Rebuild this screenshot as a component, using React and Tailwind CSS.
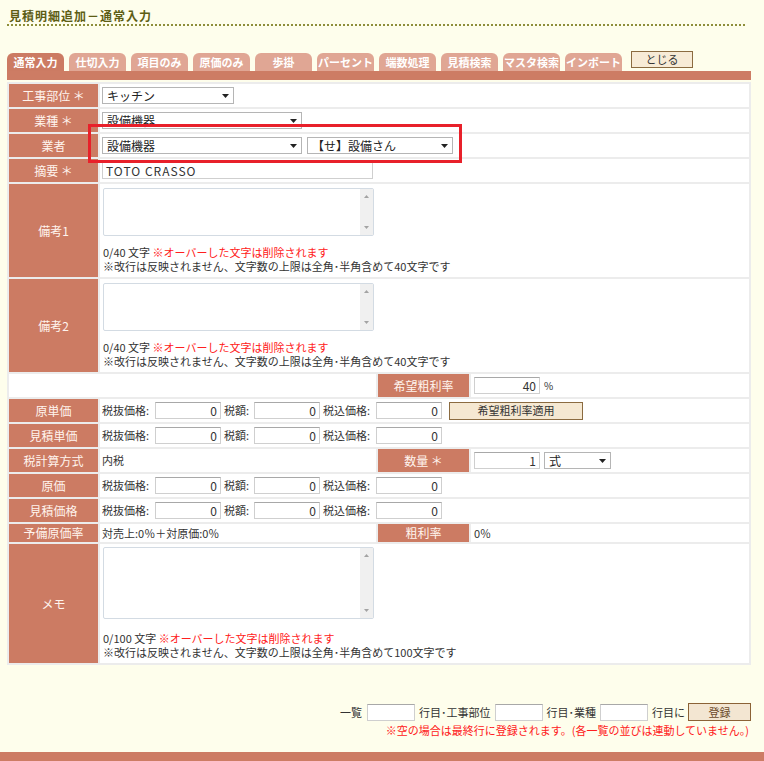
import React from 'react';

const LABEL = 'bg-[#cc7b63] text-[#fff4ee] text-[12px] flex items-center justify-center shrink-0';

const Arrow = () => (
    <svg width="7" height="4" viewBox="0 0 7 4" className="shrink-0">
        <path d="M0 0 L7 0 L3.5 4 Z" fill="#222" />
    </svg>
);

const Select = ({ w, value }) => (
    <div className={`${w} h-[17px] bg-white border border-[#b5b5b5] flex items-center justify-between pl-[4px] pr-[4px] text-[12px] text-[#222]`}>
        <span>{value}</span>
        <Arrow />
    </div>
);

const Input = ({ w, value, align = 'right', extra = '' }) => (
    <div className={`${w} h-[17px] bg-white border border-[#cfcfcf] border-t-[#a8a8a8] flex items-center px-[3px] text-[12px] text-[#333] ${align === 'right' ? 'justify-end' : 'justify-start'} ${extra}`}>
        {value}
    </div>
);

const TextArea = ({ h }) => (
    <div className={`w-[271px] ${h} bg-white border border-[#d3dbe3] rounded-[2px] flex justify-end`}>
        <div className="w-[13px] h-full bg-[#f0f0f0] flex flex-col items-center justify-between py-[6px]">
            <svg width="5" height="3" viewBox="0 0 5 3"><path d="M0 3 L5 3 L2.5 0 Z" fill="#a3a3a3" /></svg>
            <svg width="5" height="3" viewBox="0 0 5 3"><path d="M0 0 L5 0 L2.5 3 Z" fill="#a3a3a3" /></svg>
        </div>
    </div>
);

const Counter = ({ max }) => (
    <div className="text-[11px] text-[#333] flex flex-col">
        <div className="h-[14px] leading-[14px]">
            0/{max} 文字 <span className="text-[#ff2020]">※オーバーした文字は削除されます</span>
        </div>
        <div className="h-[14px] leading-[14px]">※改行は反映されません、文字数の上限は全角･半角含めて{max}文字です</div>
    </div>
);

const PriceFields = () => (
    <div className="flex items-center text-[11px] text-[#333]">
        <span className="w-[53px]">税抜価格:</span>
        <Input w="w-[66px]" value="0" />
        <span className="ml-[3px] w-[30px]">税額:</span>
        <Input w="w-[66px]" value="0" />
        <span className="ml-[3px] w-[53px]">税込価格:</span>
        <Input w="w-[66px]" value="0" />
    </div>
);

const Row = ({ label, h = 'h-[23px]', children }) => (
    <div className={`flex gap-[2px] ${h}`}>
        <div className={`${LABEL} w-[89px]`}>{label}</div>
        <div className="flex-1 bg-white flex items-center pl-[2px]">{children}</div>
    </div>
);

const SplitRow = ({ label, h = 'h-[23px]', left, label2, right }) => (
    <div className={`flex gap-[2px] ${h}`}>
        {label ? (
            <>
                <div className={`${LABEL} w-[89px]`}>{label}</div>
                <div className="w-[276px] bg-white flex items-center pl-[2px] text-[11px] text-[#333]">{left}</div>
            </>
        ) : (
            <div className="w-[367px] bg-white" />
        )}
        <div className={`${LABEL} w-[91px]`}>{label2}</div>
        <div className="flex-1 bg-white flex items-center pl-[3px] text-[11px] text-[#333]">{right}</div>
    </div>
);

const tabs = ['通常入力', '仕切入力', '項目のみ', '原価のみ', '歩掛', 'パーセント', '端数処理', '見積検索', 'マスタ検索', 'インポート'];

export default function App() {
    return (
        <div className="w-[764px] h-[761px] bg-[#fefeec] flex flex-col relative" style={{ fontFamily: '"Noto Sans CJK JP", "Noto Sans", sans-serif' }}>
            {/* Title */}
            <div className="px-[7px] pt-[9px] w-[752px]">
                <div className="pl-[2px] text-[12px] leading-[14px] font-bold tracking-[1px] text-[#5d5d15]">見積明細追加－通常入力</div>
                <div className="mt-[1px] border-b-2 border-dotted border-[#8e8e3a]" />
            </div>

            {/* Tabs */}
            <div className="mt-[25px] pl-[7px] flex items-end gap-[5px] h-[20px]">
                {tabs.map((t, i) => (
                    <div
                        key={t}
                        className={`w-[57px] h-[18px] rounded-t-[6px] flex items-center justify-center text-[11px] font-bold text-white ${i === 0 ? 'bg-[#cc7b63]' : 'bg-[#e0a694]'}`}
                    >
                        {t}
                    </div>
                ))}
                <div className="ml-[4px] mb-[3px] w-[62px] h-[17px] bg-[#f7ebd6] border border-[#8b6b40] flex items-center justify-center text-[11px] text-[#333]">
                    とじる
                </div>
            </div>
            <div className="ml-[7px] w-[744px] h-[9px] bg-[#cd7c64]" />

            {/* Form table */}
            <div className="ml-[7px] mt-[2px] w-[744px] bg-[#ececec] p-[2px] flex flex-col gap-[2px]">
                <Row label="工事部位 ＊">
                    <Select w="w-[132px]" value="キッチン" />
                </Row>
                <Row label="業種 ＊">
                    <Select w="w-[200px]" value="設備機器" />
                </Row>
                <Row label="業者">
                    <div className="flex gap-[5px]">
                        <Select w="w-[200px]" value="設備機器" />
                        <Select w="w-[146px]" value="【せ】設備さん" />
                    </div>
                </Row>
                <Row label="摘要 ＊">
                    <Input w="w-[271px]" value="TOTO CRASSO" align="left" extra="tracking-[1px]" />
                </Row>
                <div className="flex gap-[2px] h-[93px]">
                    <div className={`${LABEL} w-[89px]`}>備考1</div>
                    <div className="flex-1 bg-white pl-[3px] pt-[4px] flex flex-col">
                        <TextArea h="h-[48px]" />
                        <div className="mt-[9px]"><Counter max="40" /></div>
                    </div>
                </div>
                <div className="flex gap-[2px] h-[93px]">
                    <div className={`${LABEL} w-[89px]`}>備考2</div>
                    <div className="flex-1 bg-white pl-[3px] pt-[4px] flex flex-col">
                        <TextArea h="h-[48px]" />
                        <div className="mt-[9px]"><Counter max="40" /></div>
                    </div>
                </div>
                <SplitRow
                    label2="希望粗利率"
                    right={
                        <div className="flex items-center gap-[4px]">
                            <Input w="w-[66px]" value="40" />
                            <span className="text-[10px]">%</span>
                        </div>
                    }
                />
                <Row label="原単価">
                    <PriceFields />
                    <div className="ml-[7px] w-[134px] h-[18px] bg-[#f5e8d2] border border-[#8b6b40] flex items-center justify-center text-[11px] text-[#333]">
                        希望粗利率適用
                    </div>
                </Row>
                <Row label="見積単価">
                    <PriceFields />
                </Row>
                <SplitRow
                    label="税計算方式"
                    left="内税"
                    label2="数量 ＊"
                    right={
                        <div className="flex items-center gap-[4px]">
                            <Input w="w-[66px]" value="1" />
                            <Select w="w-[67px]" value="式" />
                        </div>
                    }
                />
                <Row label="原価">
                    <PriceFields />
                </Row>
                <Row label="見積価格">
                    <PriceFields />
                </Row>
                <SplitRow h="h-[18px]" label="予備原価率" left="対売上:0％＋対原価:0％" label2="粗利率" right="0％" />
                <div className="flex gap-[2px] h-[119px]">
                    <div className={`${LABEL} w-[89px]`}>メモ</div>
                    <div className="flex-1 bg-white pl-[3px] pt-[3px] flex flex-col">
                        <TextArea h="h-[72px]" />
                        <div className="mt-[12px]"><Counter max="100" /></div>
                    </div>
                </div>
            </div>

            {/* Register */}
            <div className="mt-[38px] w-[751px] flex flex-col items-end">
                <div className="flex items-center text-[11px] text-[#333]">
                    <span className="mr-[5px]">一覧</span>
                    <Input w="w-[48px]" value="" />
                    <span className="mx-[4px]">行目･工事部位</span>
                    <Input w="w-[48px]" value="" />
                    <span className="mx-[4px]">行目･業種</span>
                    <Input w="w-[48px]" value="" />
                    <span className="ml-[4px] mr-[3px]">行目に</span>
                    <div className="w-[63px] h-[18px] bg-[#f3e6d2] border border-[#8b6236] flex items-center justify-center text-[11px] text-[#6b4a2a]">
                        登録
                    </div>
                </div>
                <div className="mt-[1px] mr-[2px] text-[11px] text-[#ff2020]">※空の場合は最終行に登録されます。(各一覧の並びは連動していません。)</div>
            </div>

            <div className="mt-auto h-[9px] bg-[#cd7c64]" />

            {/* Highlight annotation */}
            <div className="absolute left-[88px] top-[124px] w-[374px] h-[39px] border-[3px] border-[#e8202a]" />
        </div>
    );
}
